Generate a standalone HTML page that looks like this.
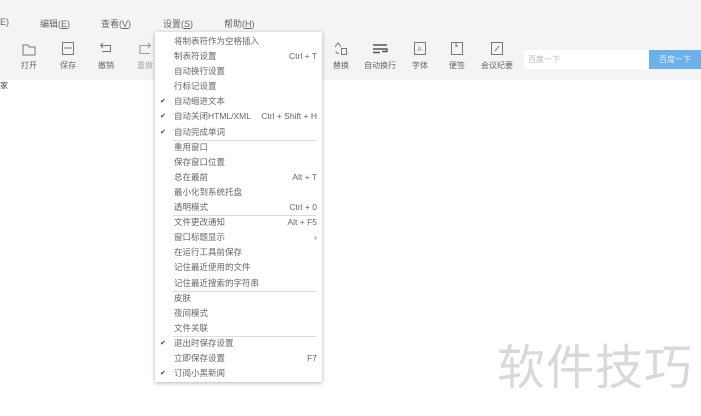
<!DOCTYPE html>
<html><head><meta charset="utf-8"><style>
*{margin:0;padding:0;box-sizing:border-box}
body{width:701px;height:416px;background:#fff;position:relative;overflow:hidden;font-family:"Liberation Sans","Noto Sans CJK SC",sans-serif;color:#555}
.top{position:absolute;left:0;top:0;width:701px;height:80px;background:#f4f4f4}
.m{position:absolute;top:17px;font-size:9px;color:#666}
.tb{position:absolute;top:41px;width:40px;text-align:center;font-size:8px;color:#666}
.tb svg{display:block;margin:0 auto 4px}
.menu{position:absolute;left:155px;top:32px;width:167px;height:350px;background:#fff;box-shadow:0 1px 4px rgba(0,0,0,.3);padding-top:2px}
.it{position:relative;height:15.1px;line-height:15.1px;font-size:8.5px;padding-left:19px;color:#666}
.it .k{position:absolute;right:5px;top:0}
.it.c:before{content:"✔";position:absolute;left:5px;font-size:7px;color:#444}
.sep{border-top:1px solid #ddd;margin-left:18px;margin-right:6px;margin-bottom:-1px}
</style></head><body>
<div class="top"></div>
<div class="m" style="left:0">E)</div>
<div class="m" style="left:40px">编辑(<u>E</u>)</div>
<div class="m" style="left:101px">查看(<u>V</u>)</div>
<div class="m" style="left:163px">设置(<u>S</u>)</div>
<div class="m" style="left:224px">帮助(<u>H</u>)</div>
<div class="tb" style="left:9px"><svg width="16" height="15"><path d="M2 4h5l1 2h6v8H2z" fill="none" stroke="#777"/></svg>打开</div>
<div class="tb" style="left:48px"><svg width="16" height="15"><rect x="2.5" y="1.5" width="11" height="12" fill="none" stroke="#777"/><path d="M4 7h8" stroke="#777"/></svg>保存</div>
<div class="tb" style="left:86px"><svg width="16" height="15"><path d="M5 2L2.5 4.5 5 7M2.5 4.5h10v6H4" fill="none" stroke="#777"/></svg>撤销</div>
<div class="tb" style="left:125px;color:#aaa"><svg width="16" height="15"><path d="M11 2l2.5 2.5L11 7M13.5 4.5H3v8h10" fill="none" stroke="#999"/></svg>重做</div>
<div class="tb" style="left:321px"><svg width="16" height="15"><path d="M2 6l3-4 3 4M3 10a2 2 0 0 0 3 2M8.5 7.5h5v6h-5z" fill="none" stroke="#777"/></svg>替换</div>
<div class="tb" style="left:360px"><svg width="18" height="15"><path d="M2 4h14M2 8h14v2.5h-5M2 11.5h7" fill="none" stroke="#555" stroke-width="1.4"/></svg>自动换行</div>
<div class="tb" style="left:400px"><svg width="16" height="15"><rect x="2.5" y="1.5" width="11" height="12" fill="none" stroke="#777"/><text x="5.5" y="10" font-size="6" fill="#777">A</text></svg>字体</div>
<div class="tb" style="left:437px"><svg width="16" height="15"><rect x="2.5" y="1.5" width="11" height="12" fill="none" stroke="#777"/><path d="M7 1.5v4l2-1" fill="none" stroke="#777"/></svg>便签</div>
<div class="tb" style="left:476px;width:42px"><svg width="16" height="15"><rect x="2.5" y="1.5" width="11" height="12" fill="none" stroke="#777"/><path d="M6 10l4-5" stroke="#777"/></svg>会议纪要</div>
<div style="position:absolute;left:524px;top:50px;width:125px;height:19px;background:#fff;font-size:8px;line-height:19px;padding-left:4px;color:#bbb">百度一下</div>
<div style="position:absolute;left:649px;top:50px;width:52px;height:19px;background:#6cb0ec;font-size:8px;line-height:19px;text-align:center;color:#e8f2fc">百度一下</div>
<div style="position:absolute;left:0;top:80px;font-size:8px;color:#444">家</div>
<div class="menu">
<div class="it">将制表符作为空格插入</div>
<div class="it">制表符设置<span class="k">Ctrl + T</span></div>
<div class="it">自动换行设置</div>
<div class="it">行标记设置</div>
<div class="it c">自动缩进文本</div>
<div class="it c">自动关闭HTML/XML<span class="k">Ctrl + Shift + H</span></div>
<div class="it c">自动完成单词</div>
<div class="sep"></div>
<div class="it">重用窗口</div>
<div class="it">保存窗口位置</div>
<div class="it">总在最前<span class="k">Alt + T</span></div>
<div class="it">最小化到系统托盘</div>
<div class="it">透明模式<span class="k">Ctrl + 0</span></div>
<div class="sep"></div>
<div class="it">文件更改通知<span class="k">Alt + F5</span></div>
<div class="it">窗口标题显示<span class="k">›</span></div>
<div class="it">在运行工具前保存</div>
<div class="it">记住最近使用的文件</div>
<div class="it">记住最近搜索的字符串</div>
<div class="sep"></div>
<div class="it">皮肤</div>
<div class="it">夜间模式</div>
<div class="it">文件关联</div>
<div class="sep"></div>
<div class="it c">退出时保存设置</div>
<div class="it">立即保存设置<span class="k">F7</span></div>
<div class="it c">订阅小黑新闻</div>
</div>
<div style="position:absolute;left:497px;top:333px;font-size:48px;line-height:60px;color:#d9d9d9;font-family:'Noto Sans CJK SC',sans-serif;letter-spacing:1px">软件技巧</div>
</body></html>
